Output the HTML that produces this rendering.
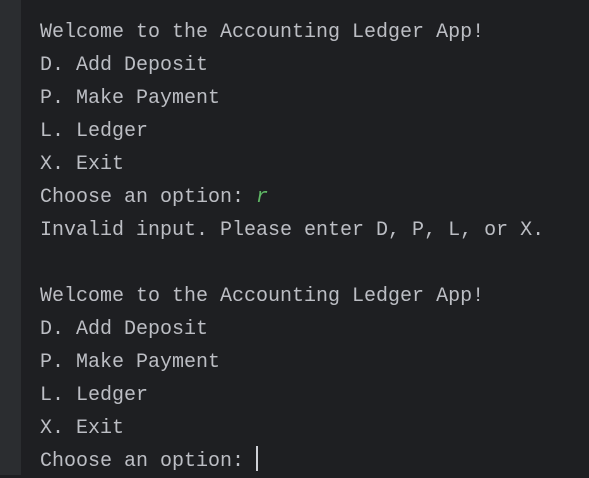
<!DOCTYPE html><html><head><style>
body{margin:0;width:589px;height:475px;background:#1e1f22;overflow:hidden;position:relative}
.g{position:absolute;left:0;top:0;width:21px;height:475px;background:#2b2d30}
.t{position:absolute;left:40px;top:16px;font-family:"Liberation Mono",monospace;font-size:20px;line-height:33px;color:#bcbec4;white-space:pre}
.r{color:#5fb865;font-style:italic}
.c{display:inline-block;width:2px;height:25px;background:#ced0d6;vertical-align:-5px}
</style></head><body><div class="g"></div><div class="t">Welcome to the Accounting Ledger App!
D. Add Deposit
P. Make Payment
L. Ledger
X. Exit
Choose an option: <span class="r">r</span>
Invalid input. Please enter D, P, L, or X.

Welcome to the Accounting Ledger App!
D. Add Deposit
P. Make Payment
L. Ledger
X. Exit
Choose an option: <span class="c"></span></div></body></html>
